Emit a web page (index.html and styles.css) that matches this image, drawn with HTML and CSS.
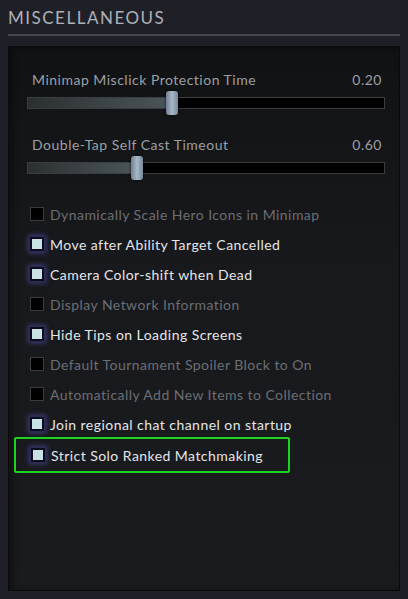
FILE: index.html
```html
<!DOCTYPE html>
<html lang="en">
<head>
    <meta charset="UTF-8">
    <meta name="viewport" content="width=device-width, initial-scale=1.0">
    <title>Miscellaneous</title>
    <link rel="stylesheet" href="styles.css">
</head>
<body>
<h1 class="section-title">MISCELLANEOUS</h1>

<div class="panel">
    <div class="slider-row">
        <div class="slider-head">
            <span>Minimap Misclick Protection Time</span>
            <span>0.20</span>
        </div>
        <div class="track">
            <div class="fill" style="width: 40.5%"></div>
            <div class="thumb" style="left: 40.5%"></div>
        </div>
    </div>

    <div class="slider-row">
        <div class="slider-head">
            <span>Double-Tap Self Cast Timeout</span>
            <span>0.60</span>
        </div>
        <div class="track">
            <div class="fill" style="width: 30.6%"></div>
            <div class="thumb" style="left: 30.6%"></div>
        </div>
    </div>

    <ul class="options">
        <li class="option"><span class="box"></span>Dynamically Scale Hero Icons in Minimap</li>
        <li class="option checked"><span class="box"></span>Move after Ability Target Cancelled</li>
        <li class="option checked"><span class="box"></span>Camera Color-shift when Dead</li>
        <li class="option"><span class="box"></span>Display Network Information</li>
        <li class="option checked"><span class="box"></span>Hide Tips on Loading Screens</li>
        <li class="option"><span class="box"></span>Default Tournament Spoiler Block to On</li>
        <li class="option"><span class="box"></span>Automatically Add New Items to Collection</li>
        <li class="option checked"><span class="box"></span>Join regional chat channel on startup</li>
        <li class="option checked highlight"><span class="box"></span>Strict Solo Ranked Matchmaking</li>
    </ul>
</div>
</body>
</html>
```

FILE: styles.css
```css
body {
    margin: 0;
    background-color: #1f2027;
    font-family: Lato, "Open Sans", sans-serif;
    height: 599px;
    overflow: hidden;
}
.section-title {
    margin: 0 8px;
    padding: 9px 0 8px;
    font-size: 17px;
    font-weight: normal;
    letter-spacing: 1.5px;
    color: #aeb1b8;
    line-height: 17px;
    border-bottom: 2px solid #45474d;
}
.panel {
    margin: 10px 8px 0;
    height: 545px;
    box-sizing: border-box;
    border: 1px solid #0b0b0d;
    background: linear-gradient(#111214, #18191c 40%, #1a1b1e);
    box-shadow: inset 4px 0 6px rgba(0, 0, 0, 0.35);
    padding: 24px 14px 0 18px;
}
.slider-row {
    margin-bottom: 27px;
}
.slider-head {
    display: flex;
    justify-content: space-between;
    padding: 0 3px 0 5px;
    font-size: 14px;
    line-height: 18px;
    letter-spacing: 0.5px;
    color: #9c9fa4;
}
.track {
    position: relative;
    margin-top: 8px;
    height: 12px;
    box-sizing: border-box;
    border: 1px solid #3b3d40;
    background-color: #000;
}
.fill {
    height: 100%;
    background: linear-gradient(90deg, #2a3032, #4b5659);
}
.thumb {
    position: absolute;
    top: -7px;
    width: 12px;
    height: 24px;
    margin-left: -6px;
    border-radius: 3px;
    background: linear-gradient(90deg, #6f7f8e, #a8b8c8 50%, #76889a);
    box-shadow: 0 0 3px rgba(0, 0, 0, 0.8);
}
.options {
    list-style: none;
    margin: -2px 0 0;
    padding: 0;
}
.option {
    display: flex;
    align-items: center;
    height: 30px;
    font-size: 14px;
    letter-spacing: 0.45px;
    color: #6b6e73;
}
.box {
    width: 14px;
    height: 14px;
    box-sizing: border-box;
    margin: 0 6px 0 3px;
    border: 1px solid #3c3c3e;
    background-color: #000;
}
.checked {
    color: #e4e6e8;
}
.checked .box {
    border: 2px solid #0c0d1c;
    background-color: #c9e2e6;
    box-shadow: 0 0 0 1px #2a2b56, 0 0 5px 2px rgba(90, 90, 200, 0.55);
}
.highlight {
    margin: -2px 0 0 -13px;
    padding-left: 12px;
    width: 276px;
    height: 36px;
    box-sizing: border-box;
    border: 2px solid #1ed41e;
    border-radius: 2px;
}
```
